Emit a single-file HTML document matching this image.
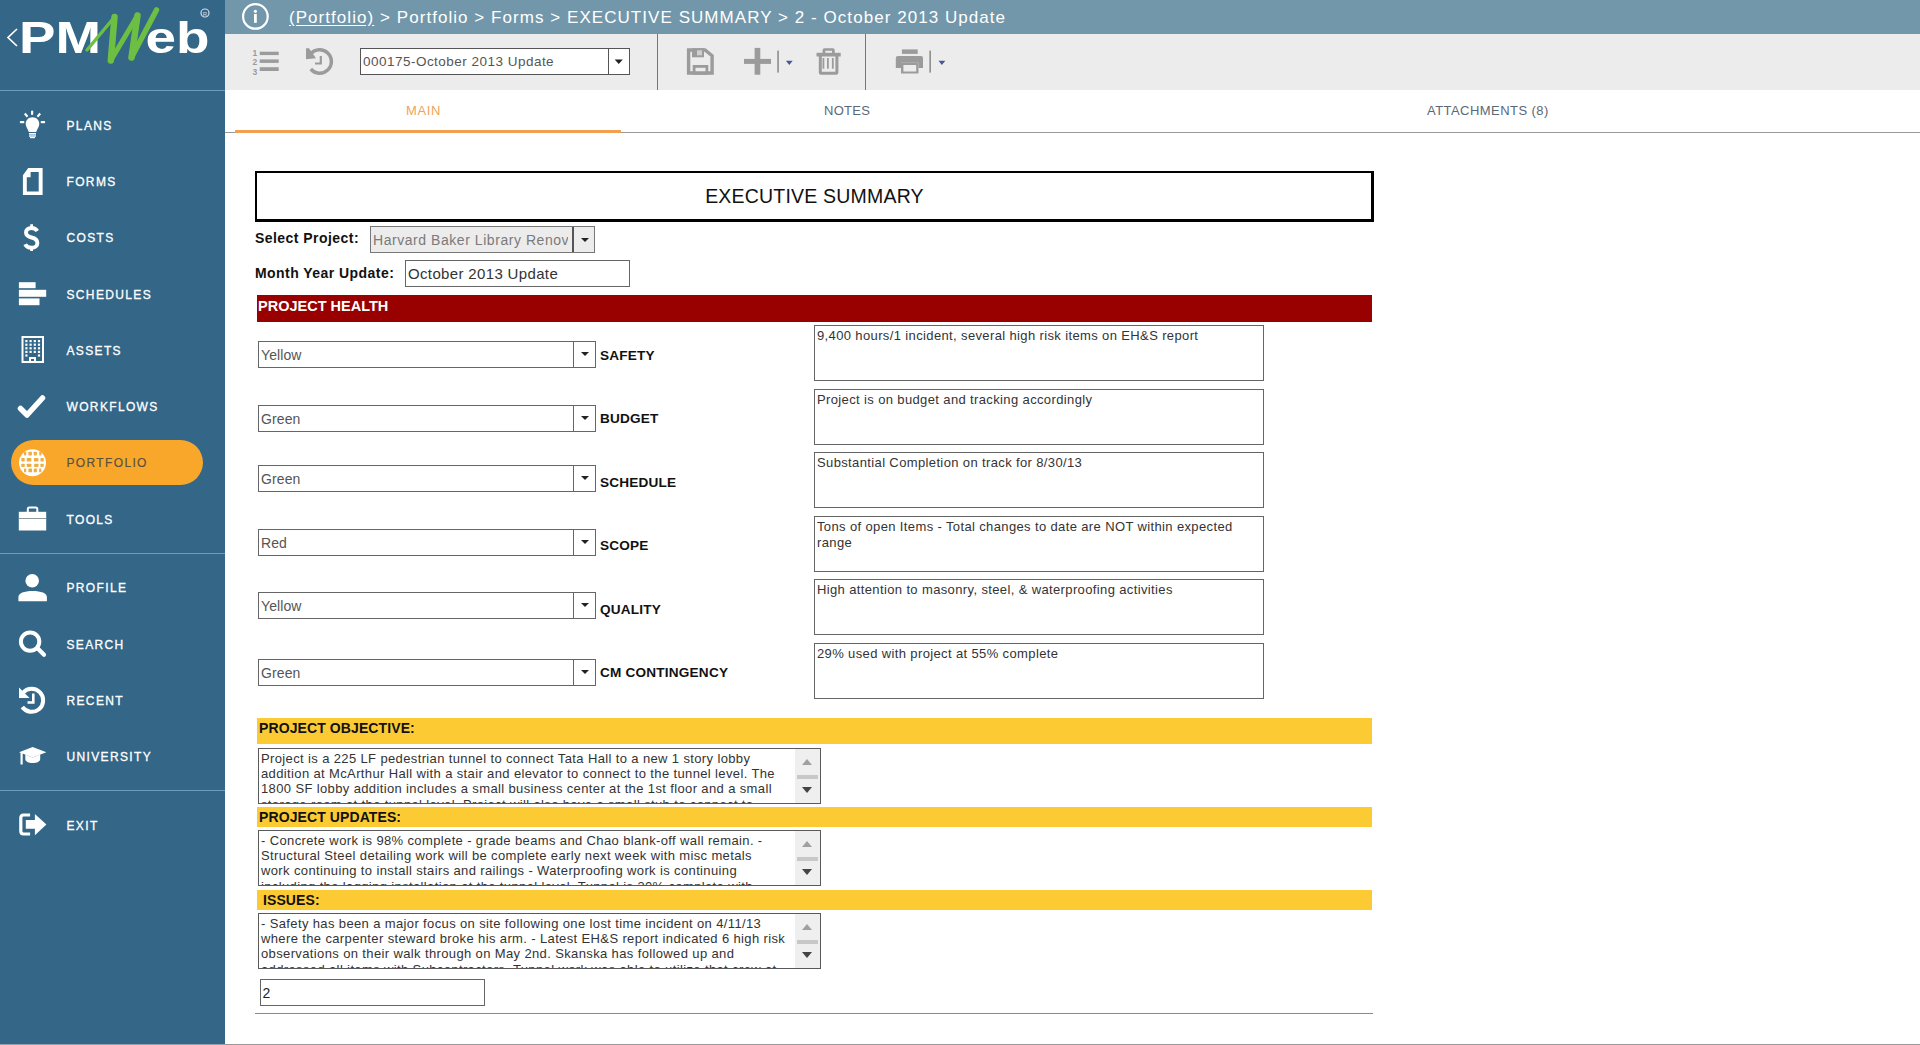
<!DOCTYPE html>
<html><head><meta charset="utf-8">
<style>
*{box-sizing:border-box;margin:0;padding:0}
html,body{width:1920px;height:1045px;overflow:hidden;background:#fff;font-family:"Liberation Sans",sans-serif}
.a{position:absolute}
#side{position:absolute;left:0;top:0;width:225px;height:1045px;background:#336687}
.sep{position:absolute;left:0;width:225px;height:1px;background:#6a9cc0}
.nav{position:absolute;left:66.5px;margin-top:1px;color:#fff;font-size:12px;line-height:16px;letter-spacing:1.35px;white-space:nowrap;-webkit-text-stroke:0.3px #fff}
.ico{position:absolute;left:0;width:64px;height:40px}
#top{position:absolute;left:225px;top:0;width:1695px;height:34px;background:#7297ab}
#tool{position:absolute;left:225px;top:34px;width:1695px;height:56px;background:#ececec}
#tabs{position:absolute;left:225px;top:90px;width:1695px;height:43px;background:#fff;border-bottom:1px solid #999}
.tab{position:absolute;top:13px;font-size:13px;line-height:16px;color:#5a6878;letter-spacing:0.3px;white-space:nowrap}

.lbl{position:absolute;font-weight:bold;font-size:14px;line-height:16px;color:#111;white-space:nowrap;letter-spacing:0.45px}
.dd{position:absolute;left:258px;width:338px;height:27px;border:1px solid #666;background:#fff}
.dd .t{position:absolute;left:2px;top:5px;font-size:14px;line-height:16px;color:#555;letter-spacing:0.1px}
.dd .b{position:absolute;right:0;top:0;width:22px;height:25px;border-left:1px solid #666}
.dd .b:after{content:"";position:absolute;left:7px;top:10px;border-left:4px solid transparent;border-right:4px solid transparent;border-top:4.5px solid #222}
.rl{position:absolute;left:600px;font-weight:bold;font-size:13.6px;line-height:16px;color:#111;white-space:nowrap;letter-spacing:0.2px}
.ta{position:absolute;left:814px;width:450px;height:56px;border:1px solid #666;background:#fff;font-size:13px;line-height:16px;color:#333;padding:2px 2px;letter-spacing:0.37px}
.hl{position:absolute;left:257px;width:1115px;font-weight:bold;font-size:14px;line-height:16px;white-space:nowrap}
.ta2{position:absolute;left:258px;width:563px;height:56px;border:1px solid #5a5a5a;background:#fff;overflow:hidden}
.ta2 .tx{position:absolute;left:2px;top:2px;width:540px;font-size:13px;line-height:15.2px;color:#333;letter-spacing:0.37px;white-space:nowrap}
.sb{position:absolute;right:0;top:0;width:25px;height:54px;background:#efefef}
.sb .u{position:absolute;left:6.5px;top:9.5px;border-left:5.8px solid transparent;border-right:5.8px solid transparent;border-bottom:6.5px solid #a0a0a0}
.sb .m{position:absolute;left:2px;top:26px;width:21px;height:4px;background:#c8c8c8}
.sb .d{position:absolute;left:6.5px;top:37.5px;border-left:5.6px solid transparent;border-right:5.6px solid transparent;border-top:6.5px solid #444}
</style></head><body>
<div id="side">
  <svg class="a" style="left:0;top:0" width="225" height="90" viewBox="0 0 225 90">
    <path d="M17 29 L8 37.5 L17 46" fill="none" stroke="#fff" stroke-width="1.7"/>
    <text x="19" y="52.5" fill="#fff" font-family="Liberation Sans" font-weight="bold" font-size="43.5" textLength="82" lengthAdjust="spacingAndGlyphs">PM</text>
    <text x="145.5" y="52.5" fill="#fff" font-family="Liberation Sans" font-weight="bold" font-size="43.5" textLength="64" lengthAdjust="spacingAndGlyphs">eb</text>
    <g fill="none" stroke="#6cbf43" stroke-linecap="round" stroke-linejoin="round">
 <path d="M87 50 L114.5 17" stroke-width="3.4"/>
 <path d="M114.5 17 L110.8 60.5" stroke-width="6.5"/>
 <path d="M110.8 60.5 L137.5 15.5" stroke-width="5"/>
 <path d="M137.5 15.5 L131.5 57.5" stroke-width="6.5"/>
 <path d="M131.5 57.5 L156.5 10" stroke-width="5.5"/>
</g>
    <circle cx="205" cy="13" r="4" fill="none" stroke="#cfe0ea" stroke-width="1.2"/>
    <text x="205" y="15.5" fill="#cfe0ea" font-size="6" text-anchor="middle" font-family="Liberation Sans">R</text>
  </svg>
  <div class="sep" style="top:90px"></div>
  <div class="sep" style="top:553px"></div>
  <div class="sep" style="top:790px"></div>

  <div class="a" style="left:11px;top:440px;width:192px;height:45px;border-radius:23px;background:#f9a72b"></div>
<svg class="a" style="left:0;top:0" width="225" height="1045" viewBox="0 0 225 1045">
<g fill="#fff" stroke="none">
 <!-- plans bulb -->
 <rect x="31" y="110.5" width="2.2" height="4.5" rx="1"/>
 <path d="M24 114.3 L25.6 112.8 L28.3 116 L26.8 117.5Z"/>
 <path d="M41 114.3 L39.4 112.8 L36.7 116 L38.2 117.5Z"/>
 <rect x="19.8" y="121" width="4.6" height="2.2" rx="1"/>
 <rect x="40.6" y="121" width="4.6" height="2.2" rx="1"/>
 <path d="M32.5 117.2 C36.5 117.2 39.3 120 39.3 124 C39.3 127 37 129 36.2 132 L28.8 132 C28 129 25.7 127 25.7 124 C25.7 120 28.5 117.2 32.5 117.2Z"/>
 <rect x="29" y="133" width="7" height="1.6"/>
 <rect x="29" y="135.3" width="7" height="1.4"/>
 <rect x="30" y="137" width="5" height="1.2"/>
</g>
<!-- forms doc -->
<path d="M28.2 168.1 L42.6 168.1 L42.6 195 L22.9 195 L22.9 175.3Z M26.8 177.2 L30.6 177.2 L30.6 172 L38.7 172 L38.7 191.6 L26.8 191.6Z" fill="#fff" fill-rule="evenodd"/>
<!-- costs $ -->
<path d="M37.3 231 C36 229 34 228 31.5 228 C28 228 26 230 26 232.6 C26 235.6 28.6 236.8 31.5 237.5 C35 238.3 37.4 239.8 37.4 243 C37.4 246 35 247.8 31.5 247.8 C28.5 247.8 26.2 246.6 25.2 244.3" fill="none" stroke="#fff" stroke-width="3.9"/><path d="M31.6 224.2 L31.6 228.5 M31.6 247 L31.6 251" stroke="#fff" stroke-width="2.8"/>
<!-- schedules -->
<g fill="#fff">
 <rect x="18.9" y="282.2" width="16.7" height="6"/>
 <rect x="18.9" y="289.8" width="27.3" height="7"/>
 <rect x="18.9" y="298.4" width="20.6" height="6.8"/>
</g>
<!-- assets -->
<rect x="22.5" y="337" width="20.5" height="25" fill="none" stroke="#fff" stroke-width="2"/>
<g fill="#fff">
 <rect x="25.3" y="340.0" width="2.2" height="2.2"/><rect x="25.3" y="343.6" width="2.2" height="2.2"/><rect x="25.3" y="347.2" width="2.2" height="2.2"/><rect x="25.3" y="350.8" width="2.2" height="2.2"/><rect x="25.3" y="354.4" width="2.2" height="2.2"/><rect x="29.5" y="340.0" width="2.2" height="2.2"/><rect x="29.5" y="343.6" width="2.2" height="2.2"/><rect x="29.5" y="347.2" width="2.2" height="2.2"/><rect x="29.5" y="350.8" width="2.2" height="2.2"/><rect x="33.7" y="340.0" width="2.2" height="2.2"/><rect x="33.7" y="343.6" width="2.2" height="2.2"/><rect x="33.7" y="347.2" width="2.2" height="2.2"/><rect x="33.7" y="350.8" width="2.2" height="2.2"/><rect x="37.9" y="340.0" width="2.2" height="2.2"/><rect x="37.9" y="343.6" width="2.2" height="2.2"/><rect x="37.9" y="347.2" width="2.2" height="2.2"/><rect x="37.9" y="350.8" width="2.2" height="2.2"/><rect x="37.9" y="354.4" width="2.2" height="2.2"/>
 <path d="M29 362 L29 357 L36 357 L36 362 L34 362 L34 359 L31 359 L31 362Z"/>
</g>
<!-- workflows check -->
<path d="M20.5 408.5 L27 415 L42.5 398" fill="none" stroke="#fff" stroke-width="5.5" stroke-linecap="round" stroke-linejoin="round"/>
<!-- portfolio globe -->
<circle cx="32.5" cy="462.7" r="13.5" fill="#fff"/>
<g fill="#ecae45"><rect x="24.04" y="451.70" width="2.18" height="3.68" rx="0.6"/><rect x="28.40" y="451.70" width="3.52" height="3.68" rx="0.6"/><rect x="33.75" y="451.70" width="3.18" height="3.68" rx="0.6"/><rect x="39.28" y="451.70" width="2.18" height="3.68" rx="0.6"/><rect x="21.36" y="458.06" width="3.35" height="3.35" rx="0.6"/><rect x="26.72" y="458.06" width="4.69" height="3.35" rx="0.6"/><rect x="33.92" y="458.06" width="4.52" height="3.35" rx="0.6"/><rect x="40.45" y="458.06" width="3.35" height="3.35" rx="0.6"/><rect x="21.36" y="463.75" width="3.35" height="3.18" rx="0.6"/><rect x="26.72" y="463.75" width="4.69" height="3.18" rx="0.6"/><rect x="34.09" y="463.75" width="4.35" height="3.18" rx="0.6"/><rect x="40.45" y="463.75" width="3.18" height="3.18" rx="0.6"/><rect x="24.04" y="468.44" width="2.18" height="3.85" rx="0.6"/><rect x="28.40" y="468.44" width="3.68" height="3.85" rx="0.6"/><rect x="33.75" y="468.44" width="3.18" height="3.85" rx="0.6"/><rect x="39.11" y="468.44" width="2.18" height="3.85" rx="0.6"/></g>
<!-- tools briefcase -->
<rect x="27.8" y="507.5" width="9.5" height="6" rx="1.5" fill="none" stroke="#fff" stroke-width="2"/>
<rect x="18.8" y="511.8" width="27.4" height="18.7" fill="#fff"/>
<rect x="18.8" y="518" width="27.4" height="1" fill="#8a9aa5"/>
<!-- profile -->
<circle cx="32.2" cy="580.8" r="6.8" fill="#fff"/>
<path d="M18.4 601.2 L18.4 597 C18.4 593 24 590.9 32.6 590.9 C41.3 590.9 46.9 593 46.9 597 L46.9 601.2Z" fill="#fff"/>
<!-- search -->
<circle cx="30.1" cy="641.6" r="9.2" fill="none" stroke="#fff" stroke-width="4"/>
<path d="M37.8 648.5 L44 654.8" stroke="#fff" stroke-width="4.2" stroke-linecap="round"/>
<!-- recent -->
<path d="M23.2 692.5 A11.5 11.5 0 1 1 22.3 707" fill="none" stroke="#fff" stroke-width="4"/>
<path d="M19 687.5 L19 698 L29.5 698Z" fill="#fff"/>
<path d="M33.3 693.5 L33.3 702.5 L27.5 702.5" fill="none" stroke="#fff" stroke-width="2.6"/>
<!-- university -->
<path d="M19.1 752.3 L32.6 747 L46.4 752.3 L32.6 757.6Z" fill="#fff"/>
<path d="M25.3 754.5 L32.6 757.6 L40.2 754.5 L40.2 759 C40.2 761.5 37 763 32.7 763 C28.5 763 25.3 761.5 25.3 759Z" fill="#fff"/>
<path d="M21.6 752.5 L21.6 764.5" stroke="#fff" stroke-width="2.2"/>
<!-- exit -->
<path d="M30.1 815 L23.5 815 Q20.8 815 20.8 818 L20.8 831 Q20.8 834 23.5 834 L30.1 834" fill="none" stroke="#fff" stroke-width="3.2"/>
<path d="M25.8 819.9 L34.9 819.9 L34.9 814.1 L46.4 824.6 L34.9 835.2 L34.9 828.7 L25.8 828.7Z" fill="#fff"/>
</svg>
  <div class="nav" style="top:117px">PLANS</div>
  <div class="nav" style="top:173px">FORMS</div>
  <div class="nav" style="top:229px">COSTS</div>
  <div class="nav" style="top:286px">SCHEDULES</div>
  <div class="nav" style="top:342px">ASSETS</div>
  <div class="nav" style="top:398px">WORKFLOWS</div>
    <div class="nav" style="top:454px;color:#5b5140;-webkit-text-stroke:0.2px #5b5140">PORTFOLIO</div>
  <div class="nav" style="top:511px">TOOLS</div>
  <div class="nav" style="top:579px">PROFILE</div>
  <div class="nav" style="top:636px">SEARCH</div>
  <div class="nav" style="top:692px">RECENT</div>
  <div class="nav" style="top:748px">UNIVERSITY</div>
  <div class="nav" style="top:817px">EXIT</div>
</div>
<div id="top">
 <div class="a" style="left:64px;top:8px;font-size:17px;line-height:20px;color:#fff;letter-spacing:1.05px;white-space:nowrap"><span style="text-decoration:underline;text-underline-offset:2px">(Portfolio)</span> &gt; Portfolio &gt; Forms &gt; EXECUTIVE SUMMARY &gt; 2 - October 2013 Update</div>
</div>
<div class="a" style="left:225px;top:34px;width:1695px;height:1px;background:#f4f6f7"></div>
<svg class="a" style="left:225px;top:0;z-index:5" width="760" height="90" viewBox="225 0 760 90">
 <circle cx="255.4" cy="16.4" r="12.3" fill="none" stroke="#fff" stroke-width="2.2"/>
 <circle cx="255.4" cy="11.3" r="1.6" fill="#fff"/>
 <rect x="254" y="14" width="2.8" height="8.8" fill="#fff"/>
 <g fill="#9b9b9b">
  <rect x="259.7" y="51.7" width="19" height="3.4"/>
  <rect x="259.7" y="59.4" width="19" height="3.5"/>
  <rect x="259.7" y="67.2" width="19" height="3.8"/>
 </g>
 <g font-family="Liberation Sans" font-weight="bold" font-size="8.5" fill="#9b9b9b" text-anchor="middle">
  <text x="254.8" y="56">1</text><text x="254.8" y="65">2</text><text x="254.8" y="74.5">3</text>
 </g>
 <path d="M310.8 54 A11.65 11.65 0 1 1 310.8 69" fill="none" stroke="#9b9b9b" stroke-width="3.5"/>
 <path d="M306 48.2 L309 48.2 L316 58.2 L306 59.2Z" fill="#9b9b9b"/>
 <path d="M319.7 56 L321.9 56 L321.9 64.6 L315 64.6 L315 62.4 L319.7 62.4Z" fill="#9b9b9b"/>
 <rect x="360.5" y="48.5" width="269" height="26" fill="#fff" stroke="#555" stroke-width="1"/>
 <line x1="608.5" y1="49" x2="608.5" y2="74" stroke="#555" stroke-width="1"/>
 <path d="M614.7 59.4 L622.8 59.4 L618.75 63.9Z" fill="#222"/>
 <line x1="657.5" y1="34" x2="657.5" y2="90" stroke="#777" stroke-width="1"/>
 <line x1="865.5" y1="34" x2="865.5" y2="90" stroke="#777" stroke-width="1"/>
 <g fill="#9b9b9b">
  </g><path d="M688.6 50 L705 50 L712.1 55.8 L712.1 73 L688.6 73 Z" fill="none" stroke="#9b9b9b" stroke-width="3.4"/><g fill="#9b9b9b"><rect x="692" y="48.3" width="12" height="9"/><rect x="697" y="50.3" width="5" height="5" fill="#cfcfcf"/></g><rect x="694.1" y="66.4" width="12.8" height="7" fill="none" stroke="#9b9b9b" stroke-width="2.8"/>
<g fill="#9b9b9b">
  <rect x="744" y="58.9" width="27" height="5"/>
  <rect x="754.6" y="47.9" width="5.7" height="26.8"/>
  <rect x="816.5" y="52.8" width="24.2" height="3.7"/>
  <path d="M822.6 53 L822.6 50 Q822.6 48.3 824.5 48.3 L833 48.3 Q834.7 48.3 834.7 50 L834.7 53 L832 53 L832 50.8 L825.3 50.8 L825.3 53Z"/>
  <path d="M818.8 56 L838.4 56 L838.4 72.5 Q838.4 74.7 836.2 74.7 L821 74.7 Q818.8 74.7 818.8 72.5Z M821.8 56 L821.8 71.7 L835.4 71.7 L835.4 56Z" fill-rule="evenodd"/>
  <rect x="822.5" y="58" width="1.8" height="10.7"/>
  <rect x="827" y="58" width="1.8" height="10.7"/>
  <rect x="831.9" y="58" width="1.8" height="10.7"/>
  <rect x="901.9" y="49.4" width="15.8" height="4.5"/>
  <path d="M898 55.9 L921 55.9 Q923 55.9 923 58 L923 68 L918.5 68 L918.5 62.7 L901 62.7 L901 68 L895.8 68 L895.8 58 Q895.8 55.9 898 55.9Z"/>
  <path d="M901 62.7 L918.5 62.7 L918.5 73.5 L901 73.5Z M903.4 65 L903.4 71.5 L916.2 71.5 L916.2 65Z" fill-rule="evenodd"/>
 </g>
 <rect x="777.3" y="50.6" width="1.5" height="22" fill="#888"/>
 <rect x="929.4" y="50.6" width="1.5" height="22" fill="#888"/>
 <path d="M785.9 60.8 L792.7 60.8 L789.3 65Z" fill="#4a5696"/>
 <path d="M938.5 60.8 L945.3 60.8 L941.9 65Z" fill="#4a5696"/>
</svg>
<div class="a" style="z-index:6;left:363px;top:54px;font-size:13.5px;line-height:16px;color:#555;letter-spacing:0.48px;white-space:nowrap">000175-October 2013 Update</div>
<div id="tool"></div>
<div id="tabs">
 <div class="tab" style="left:181px;color:#f0a35a;letter-spacing:0.6px">MAIN</div>
 <div class="a" style="left:10px;top:40px;width:386px;height:3px;background:#f0a050"></div>
 <div class="tab" style="left:599px">NOTES</div>
 <div class="tab" style="left:1202px;letter-spacing:0.45px">ATTACHMENTS (8)</div>
</div>

<div class="a" style="left:255px;top:171px;width:1119px;height:51px;border:2px solid #000;border-right-width:3px;border-bottom-width:3px"></div>
<div class="a" style="left:255px;top:185px;width:1119px;text-align:center;font-size:19.5px;line-height:22px;color:#111;letter-spacing:0.2px">EXECUTIVE SUMMARY</div>
<div class="lbl" style="left:255px;top:230px">Select Project:</div>
<div class="a" style="left:370px;top:226px;width:225px;height:27px;border:1px solid #777;background:#ececec;overflow:hidden">
 <div class="a" style="left:2px;top:4.5px;width:195px;overflow:hidden;font-size:14px;line-height:16px;color:#7a7a7a;letter-spacing:0.55px;white-space:nowrap">Harvard Baker Library Renovation</div>
 <div class="a" style="left:201px;top:0;width:23px;height:25px;border-left:2px solid #555"></div>
 <div class="a" style="left:209.5px;top:11px;border-left:4px solid transparent;border-right:4px solid transparent;border-top:4.5px solid #222"></div>
</div>
<div class="lbl" style="left:255px;top:265px">Month Year Update:</div>
<div class="a" style="left:405px;top:260px;width:225px;height:27px;border:1px solid #666;background:#fff">
 <div class="a" style="left:2px;top:5px;font-size:15px;line-height:16px;color:#333;letter-spacing:0.35px;white-space:nowrap">October 2013 Update</div>
</div>
<div class="hl" style="top:295px;height:27px;background:#990000;color:#fff;padding:3px 0 0 1px;font-size:14.5px">PROJECT HEALTH</div>

<div class="dd" style="top:341px"><div class="t">Yellow</div><div class="b"></div></div>
<div class="rl" style="top:348px">SAFETY</div>
<div class="ta" style="top:325px">9,400 hours/1 incident, several high risk items on EH&amp;S report</div>

<div class="dd" style="top:405px"><div class="t">Green</div><div class="b"></div></div>
<div class="rl" style="top:411px">BUDGET</div>
<div class="ta" style="top:389px">Project is on budget and tracking accordingly</div>

<div class="dd" style="top:465px"><div class="t">Green</div><div class="b"></div></div>
<div class="rl" style="top:475px">SCHEDULE</div>
<div class="ta" style="top:452px">Substantial Completion on track for 8/30/13</div>

<div class="dd" style="top:529px"><div class="t">Red</div><div class="b"></div></div>
<div class="rl" style="top:538px">SCOPE</div>
<div class="ta" style="top:516px">Tons of open Items - Total changes to date are NOT within expected range</div>

<div class="dd" style="top:592px"><div class="t">Yellow</div><div class="b"></div></div>
<div class="rl" style="top:602px">QUALITY</div>
<div class="ta" style="top:579px">High attention to masonry, steel, &amp; waterproofing activities</div>

<div class="dd" style="top:659px"><div class="t">Green</div><div class="b"></div></div>
<div class="rl" style="top:665px">CM CONTINGENCY</div>
<div class="ta" style="top:643px">29% used with project at 55% complete</div>

<div class="hl" style="top:718px;height:26px;background:#fccb33;color:#111;padding:2px 0 0 2px;letter-spacing:0.1px">PROJECT OBJECTIVE:</div>
<div class="ta2" style="top:748px"><div class="tx">Project is a 225 LF pedestrian tunnel to connect Tata Hall to a new 1 story lobby<br>addition at McArthur Hall with a stair and elevator to connect to the tunnel level. The<br>1800 SF lobby addition includes a small business center at the 1st floor and a small<br>storage room at the tunnel level. Project will also have a small stub to connect to</div><div class="sb"><div class="u"></div><div class="m"></div><div class="d"></div></div></div>

<div class="hl" style="top:807px;height:20px;background:#fccb33;color:#111;padding:2px 0 0 2px;letter-spacing:0.1px">PROJECT UPDATES:</div>
<div class="ta2" style="top:830px"><div class="tx">- Concrete work is 98% complete - grade beams and Chao blank-off wall remain. -<br>Structural Steel detailing work will be complete early next week with misc metals<br>work continuing to install stairs and railings - Waterproofing work is continuing<br>including the lagging installation at the tunnel level. Tunnel is 30% complete with</div><div class="sb"><div class="u"></div><div class="m"></div><div class="d"></div></div></div>

<div class="hl" style="top:890px;height:20px;background:#fccb33;color:#111;padding:2px 0 0 6px;letter-spacing:0.1px">ISSUES:</div>
<div class="ta2" style="top:913px"><div class="tx">- Safety has been a major focus on site following one lost time incident on 4/11/13<br>where the carpenter steward broke his arm. - Latest EH&amp;S report indicated 6 high risk<br>observations on their walk through on May 2nd. Skanska has followed up and<br>addressed all items with Subcontractors. Tunnel work was able to utilize that crew at</div><div class="sb"><div class="u"></div><div class="m"></div><div class="d"></div></div></div>

<div class="a" style="left:260px;top:979px;width:225px;height:27px;border:1px solid #666;background:#fff">
 <div class="a" style="left:1.5px;top:5px;font-size:14px;line-height:16px;color:#222">2</div>
</div>
<div class="a" style="left:255px;top:1013px;width:1118px;height:1px;background:#8a8a8a"></div>
<div class="a" style="left:225px;top:1044px;width:1695px;height:1px;background:#999"></div>
<div class="a" style="left:0;top:1044px;width:225px;height:1px;background:#8da4b4"></div>
</body></html>
